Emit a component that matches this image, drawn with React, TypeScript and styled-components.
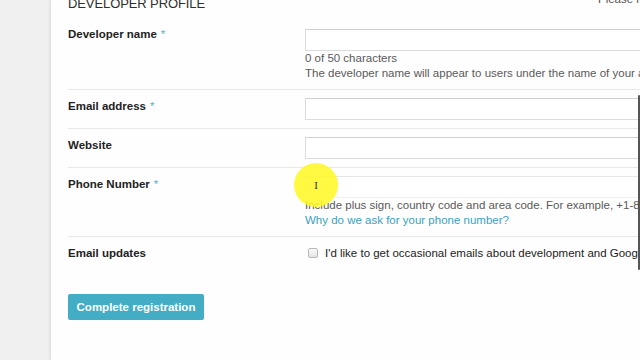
import * as React from "react";
import styled, { createGlobalStyle } from "styled-components";

const GlobalStyle = createGlobalStyle`
	html, body {
		margin: 0;
		padding: 0;
		width: 640px;
		height: 360px;
		overflow: hidden;
		background: #f1f1f1;
		font-family: "Liberation Sans", Arial, Helvetica, sans-serif;
	}
`;

const Page = styled.div`
	position: relative;
	display: flex;
	width: 640px;
	height: 360px;
	overflow: hidden;
`;

const SideStrip = styled.div`
	flex: 0 0 50px;
	background: #f0f0f0;
`;

const Panel = styled.div`
	flex: 1;
	min-width: 0;
	background: #fefefe;
	border-left: 1px solid #e4e4e4;
	box-shadow: -1px 0 2px rgba(0, 0, 0, 0.06);
	padding-left: 17px;
	overflow: hidden;
`;

const Header = styled.div`
	display: flex;
	align-items: flex-start;
	width: 700px;
	margin-top: -4px;
	height: 27px;
`;

const Title = styled.h2`
	margin: 0;
	width: 530px;
	font-size: 13px;
	font-weight: normal;
	letter-spacing: -0.1px;
	color: #2e2e2e;
	line-height: 16px;
`;

const Note = styled.span`
	font-size: 11.5px;
	color: #555;
	line-height: 12px;
	margin-top: -3px;
	white-space: nowrap;
`;

const Row = styled.div<{ $last?: boolean; $top?: number }>`
	display: grid;
	grid-template-columns: 237px 420px;
	padding: ${(p) => p.$top ?? 8}px 0 8px;
	border-bottom: ${(p) => (p.$last ? "none" : "1px solid #e8e8e8")};
	width: 700px;
`;

const Label = styled.div`
	font-size: 11.5px;
	font-weight: bold;
	color: #222;
	line-height: 16px;
`;

const Req = styled.span`
	color: #5bb3b5;
	font-weight: normal;
	margin-left: 4px;
`;

const Field = styled.div<{ $offset?: number }>`
	display: flex;
	flex-direction: column;
	padding-top: ${(p) => p.$offset ?? 0}px;
`;

const Input = styled.input<{ $faint?: boolean }>`
	box-sizing: border-box;
	width: 420px;
	height: 22px;
	margin: 0;
	border: 1px solid ${(p) => (p.$faint ? "#f0f0f0" : "#dcdcdc")};
	border-top-color: ${(p) => (p.$faint ? "#e6e6e6" : "#d0d0d0")};
	background: #fff;
	outline: none;
	font: inherit;
`;

const Help = styled.div<{ $link?: boolean }>`
	font-size: 11.5px;
	line-height: 15px;
	color: ${(p) => (p.$link ? "#3d9fbe" : "#5a5a5a")};
	white-space: nowrap;
	cursor: ${(p) => (p.$link ? "pointer" : "default")};
`;

const CheckLine = styled.label`
	display: flex;
	align-items: center;
	gap: 7px;
	padding-left: 3px;
	font-size: 11.5px;
	color: #222;
	line-height: 16px;
	white-space: nowrap;
`;

const Box = styled.span`
	flex: 0 0 auto;
	display: inline-block;
	box-sizing: border-box;
	width: 10px;
	height: 10px;
	border: 1px solid #b8b8b8;
	border-radius: 2px;
	background: linear-gradient(#fafafa, #e4e4e4);
`;

const Button = styled.button`
	margin-top: 25px;
	width: 136px;
	height: 26px;
	border: none;
	border-radius: 2px;
	background: #42adc4;
	color: #fff;
	font-family: inherit;
	font-size: 11.5px;
	font-weight: bold;
	padding: 0;
	cursor: pointer;
`;

const Scroll = styled.div`
	position: absolute;
	right: 0;
	top: 95px;
	width: 2px;
	height: 175px;
	background: #555;
	border-radius: 1px;
`;

const Spot = styled.div`
	position: absolute;
	left: 294px;
	top: 163px;
	width: 44px;
	height: 44px;
	border-radius: 50%;
	background: rgba(255, 248, 40, 0.88);
	display: flex;
	align-items: center;
	justify-content: center;
	font-family: "Liberation Serif", serif;
	font-size: 11px;
	color: #333;
`;

export default function App() {
	return (
		<Page>
			<GlobalStyle />
			<SideStrip />
			<Panel>
				<Header>
					<Title>DEVELOPER PROFILE</Title>
					<Note>Please note</Note>
				</Header>
				<Row $top={3}>
					<Label>
						Developer name<Req>*</Req>
					</Label>
					<Field $offset={3}>
						<Input />
						<Help>0 of 50 characters</Help>
						<Help>
							The developer name will appear to users under the name of your apps.
						</Help>
					</Field>
				</Row>
				<Row>
					<Label>
						Email address<Req>*</Req>
					</Label>
					<Field>
						<Input />
					</Field>
				</Row>
				<Row>
					<Label>Website</Label>
					<Field>
						<Input />
					</Field>
				</Row>
				<Row>
					<Label>
						Phone Number<Req>*</Req>
					</Label>
					<Field>
						<Input $faint />
						<Help>
							Include plus sign, country code and area code. For example, +1-800-555-0100.
						</Help>
						<Help $link>Why do we ask for your phone number?</Help>
					</Field>
				</Row>
				<Row $last>
					<Label>Email updates</Label>
					<Field>
						<CheckLine>
							<Box />
							I'd like to get occasional emails about development and Google Play opportunities.
						</CheckLine>
					</Field>
				</Row>
				<Button>Complete registration</Button>
			</Panel>
			<Scroll />
			<Spot>I</Spot>
		</Page>
	);
}
